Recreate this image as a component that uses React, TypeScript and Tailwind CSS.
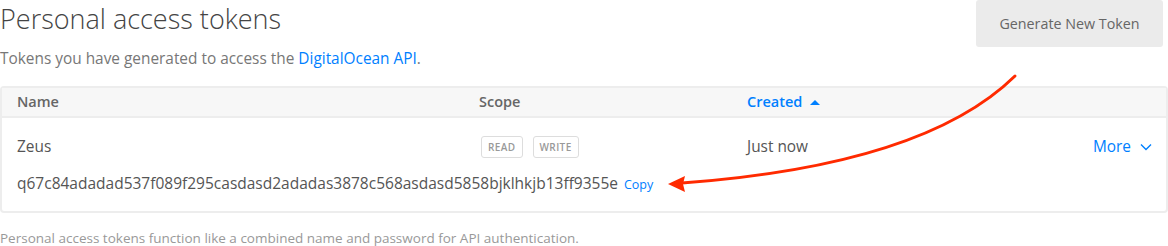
import React from "react";

export default function App() {
  const font = { fontFamily: '"Open Sans", "Liberation Sans", sans-serif' };
  return (
    <div className="relative w-[1168px] h-[246px] bg-white overflow-hidden" style={font}>
      <div className="flex items-start justify-between">
        <div>
          <h1 className="text-[27px] leading-[38px] font-light text-[#444]">Personal access tokens</h1>
          <p className="mt-[2px] text-[15.4px] leading-[38px] text-[#777]">
            Tokens you have generated to access the <span className="text-[#0080ff]">DigitalOcean API</span>.
          </p>
        </div>
        <button className="mr-[5px] w-[187px] h-[47px] rounded-[3px] bg-[#ebebeb] text-[14.3px] text-[#666]">Generate New Token</button>
      </div>
      <div className="mt-[8px] border-2 border-[#ededed] rounded-[4px]">
        <div className="grid grid-cols-[462px_268px_1fr] h-[30px] items-center bg-[#f7f7f7] border-b-2 border-[#ededed] pl-[15px] text-[14.5px] font-semibold text-[#666]">
          <div>Name</div>
          <div>Scope</div>
          <div className="flex items-center gap-[8px] text-[#0080ff]">
            Created
            <svg width="10" height="6" viewBox="0 0 10 6"><path d="M0 6 L5 1 L10 6 Z" fill="#0080ff" /></svg>
          </div>
        </div>
        <div className="pl-[15px] pr-[14px] pt-[17px] pb-[16px]">
          <div className="grid grid-cols-[464px_266px_1fr] items-center h-[24px] text-[15.4px] text-[#555]">
            <div>Zeus</div>
            <div className="flex gap-[10px]">
              <span className="border border-[#ddd] rounded-[3px] px-[6px] h-[22px] flex items-center text-[10px] font-semibold text-[#999] tracking-[0.4px]">READ</span>
              <span className="border border-[#ddd] rounded-[3px] px-[6px] h-[22px] flex items-center text-[10px] font-semibold text-[#999] tracking-[0.4px]">WRITE</span>
            </div>
            <div className="flex justify-between items-center">
              <span>Just now</span>
              <span className="flex items-center gap-[9px] text-[#0080ff]">
                More
                <svg width="12" height="8" viewBox="0 0 12 8"><path d="M1 1.5 L6 6.5 L11 1.5" fill="none" stroke="#0080ff" strokeWidth="1.4" /></svg>
              </span>
            </div>
          </div>
          <div className="mt-[13px] flex items-baseline gap-[6px] text-[15.5px] text-[#555]">
            <span>q67c84adadad537f089f295casdasd2adadas3878c568asdasd5858bjklhkjb13ff9355e</span>
            <span className="text-[12.5px] text-[#0080ff]">Copy</span>
          </div>
        </div>
      </div>
      <p className="mt-[15px] text-[13.5px] text-[#999]">Personal access tokens function like a combined name and password for API authentication.</p>
      <svg className="absolute left-0 top-0 pointer-events-none" width="1168" height="246">
        <path d="M1015 76 C 960 130, 860 170, 682 183" fill="none" stroke="#ff2a00" strokeWidth="3" strokeLinecap="round" />
        <path d="M668 184 L685 176 L683 184 L685 192 Z" fill="#ff2a00" />
      </svg>
    </div>
  );
}
